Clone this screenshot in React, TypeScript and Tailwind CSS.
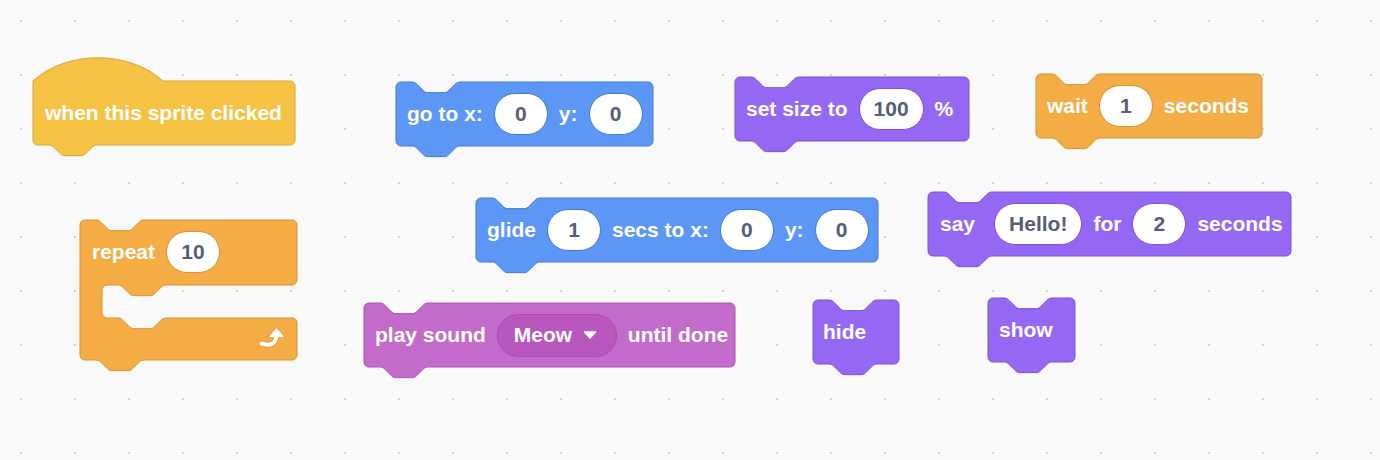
import React from 'react';

// Scratch-style block canvas

type Cat = 'events' | 'control' | 'motion' | 'looks' | 'sound';

const palette: Record<Cat, { fill: string; stroke: string; oval: string }> = {
    events: { fill: '#F6C244', stroke: '#D6A437', oval: 'border-[#D6A437]' },
    control: { fill: '#F4AC45', stroke: '#D69234', oval: 'border-[#D69234]' },
    motion: { fill: '#5C97F5', stroke: '#4479D5', oval: 'border-[#4479D5]' },
    looks: { fill: '#9568F4', stroke: '#7A53D6', oval: 'border-[#7A53D6]' },
    sound: { fill: '#C26BCB', stroke: '#A955B3', oval: 'border-[#A955B3]' },
};

const R = 5;
// notch cut into the top edge, left to right
const N =
    'c 2.67,0 4,1.33 5.33,2.67 l 5.33,5.33 c 1.33,1.33 2.67,2.67 5.33,2.67 h 16 c 2.67,0 4,-1.33 5.33,-2.67 l 5.33,-5.33 c 1.33,-1.33 2.67,-2.67 5.33,-2.67';
// tab on the bottom edge, right to left
const NR =
    'c -2.67,0 -4,1.33 -5.33,2.67 l -5.33,5.33 c -1.33,1.33 -2.67,2.67 -5.33,2.67 h -16 c -2.67,0 -4,-1.33 -5.33,-2.67 l -5.33,-5.33 c -1.33,-1.33 -2.67,-2.67 -5.33,-2.67';

const corner = (x: number, y: number, sweep = 1) => `A ${R},${R} 0 0 ${sweep} ${x},${y}`;

const stackPath = (w: number, h: number) =>
    `M 0,${R} ${corner(R, 0)} H 16 ${N} H ${w - R} ${corner(w, R)} V ${h - R} ${corner(w - R, h)} H 64 ${NR} H ${R} ${corner(0, h - R)} Z`;

const hatPath = (w: number, h: number) =>
    `M 0,0 c 34,-31 96,-31 130,0 H ${w - R} ${corner(w, R)} V ${h - R} ${corner(w - R, h)} H 64 ${NR} H ${R} ${corner(0, h - R)} Z`;

const cPath = (w: number) => {
    const a = 65;
    const b = 98;
    const h = 140;
    const arm = 22;
    return `M 0,${R} ${corner(R, 0)} H 16 ${N} H ${w - R} ${corner(w, R)} V ${a - R} ${corner(w - R, a)} H ${arm + 64} ${NR} H ${arm + R} ${corner(arm, a + R, 0)} V ${b - R} ${corner(arm + R, b, 0)} H ${arm + 16} ${N} H ${w - R} ${corner(w, b + R)} V ${h - R} ${corner(w - R, h)} H 64 ${NR} H ${R} ${corner(0, h - R)} Z`;
};

interface BlockProps {
    cat: Cat;
    w: number;
    h?: number;
    shape?: 'stack' | 'hat' | 'c';
    className: string;
    pad?: string;
    children: React.ReactNode;
}

const Block: React.FC<BlockProps> = ({ cat, w, h = 64, shape = 'stack', className, pad = 'pl-[11px]', children }) => {
    const c = palette[cat];
    const d = shape === 'hat' ? hatPath(w, h) : shape === 'c' ? cPath(w) : stackPath(w, h);
    const svgH = shape === 'c' ? 140 : h;
    return (
        <div className={`absolute ${className}`}>
            <svg width={w} height={svgH} className="block overflow-visible">
                <path d={d} fill={c.fill} stroke={c.stroke} strokeWidth={1} />
            </svg>
            <div className={`absolute top-0 left-0 flex h-[64px] items-center gap-[11px] text-white ${pad}`}>
                {children}
            </div>
        </div>
    );
};

const Label: React.FC<{ children: React.ReactNode; className?: string }> = ({ children, className = '' }) => (
    <span className={`whitespace-nowrap ${className}`}>{children}</span>
);

const Oval: React.FC<{ cat: Cat; children: React.ReactNode; className?: string }> = ({ cat, children, className = '' }) => (
    <span
        className={`flex h-[42px] min-w-[54px] items-center justify-center rounded-full border bg-white px-[14px] text-[#575E75] ${palette[cat].oval} ${className}`}
    >
        {children}
    </span>
);

const RepeatArrow = () => (
    <svg width="26" height="22" viewBox="0 0 26 22" className="absolute top-[107px] left-[179px]">
        <path d="M 2.5,16.5 Q 16,21 17.5,9" fill="none" stroke="#C9862E" strokeWidth="6" strokeLinecap="round" opacity="0.45" />
        <path d="M 17.5,1.5 L 24.5,9.5 L 10.5,9.5 Z" fill="#C9862E" stroke="#C9862E" strokeWidth="2.5" strokeLinejoin="round" opacity="0.45" />
        <path d="M 2.5,16.5 Q 16,21 17.5,9" fill="none" stroke="#fff" strokeWidth="4" strokeLinecap="round" />
        <path d="M 17.5,2 L 24,9.5 L 11,9.5 Z" fill="#fff" stroke="#fff" strokeWidth="1.5" strokeLinejoin="round" />
    </svg>
);

export default function App() {
    return (
        <div className="relative h-[460px] w-[1380px] overflow-hidden bg-[#f9f9f9] font-['Liberation_Sans',Arial,sans-serif] text-[21px] font-bold [background-image:radial-gradient(circle,#d2d2d2_0,#d2d2d2_1px,transparent_1.6px)] [background-position:-6px_-6px] [background-size:54px_54px]">
            <Block cat="events" shape="hat" w={262} className="top-[81px] left-[33px]" pad="pl-[12px]">
                <Label>when this sprite clicked</Label>
            </Block>

            <Block cat="motion" w={257} className="top-[82px] left-[396px]">
                <Label>go to x:</Label>
                <Oval cat="motion">0</Oval>
                <Label>y:</Label>
                <Oval cat="motion">0</Oval>
            </Block>

            <Block cat="looks" w={234} className="top-[77px] left-[735px]">
                <Label>set size to</Label>
                <Oval cat="looks">100</Oval>
                <Label>%</Label>
            </Block>

            <Block cat="control" w={226} className="top-[74px] left-[1036px]">
                <Label>wait</Label>
                <Oval cat="control">1</Oval>
                <Label>seconds</Label>
            </Block>

            <Block cat="control" shape="c" w={217} className="top-[220px] left-[80px]" pad="pl-[12px]">
                <Label>repeat</Label>
                <Oval cat="control">10</Oval>
            </Block>
            <div className="absolute top-[220px] left-[80px]">
                <RepeatArrow />
            </div>

            <Block cat="motion" w={402} className="top-[198px] left-[476px]">
                <Label>glide</Label>
                <Oval cat="motion">1</Oval>
                <Label>secs to x:</Label>
                <Oval cat="motion">0</Oval>
                <Label>y:</Label>
                <Oval cat="motion">0</Oval>
            </Block>

            <Block cat="looks" w={363} className="top-[192px] left-[928px]" pad="pl-[12px]">
                <Label>say</Label>
                <Oval cat="looks" className="ml-[8px]">Hello!</Oval>
                <Label>for</Label>
                <Oval cat="looks">2</Oval>
                <Label>seconds</Label>
            </Block>

            <Block cat="sound" w={371} className="top-[303px] left-[364px]">
                <Label>play sound</Label>
                <span className="flex h-[43px] w-[120px] items-center gap-[11px] rounded-full border border-[#A64CAE] bg-[#B857BE] pl-[16px] text-white">
                    <span>Meow</span>
                    <svg width="14" height="8" viewBox="0 0 14 8">
                        <path d="M 1.5,1 L 12.5,1 L 7,7 Z" fill="#fff" stroke="#fff" strokeWidth="1.5" strokeLinejoin="round" />
                    </svg>
                </span>
                <Label>until done</Label>
            </Block>

            <Block cat="looks" w={86} className="top-[300px] left-[813px]" pad="pl-[10px]">
                <Label>hide</Label>
            </Block>

            <Block cat="looks" w={87} className="top-[298px] left-[988px]" pad="pl-[11px]">
                <Label>show</Label>
            </Block>
        </div>
    );
}
